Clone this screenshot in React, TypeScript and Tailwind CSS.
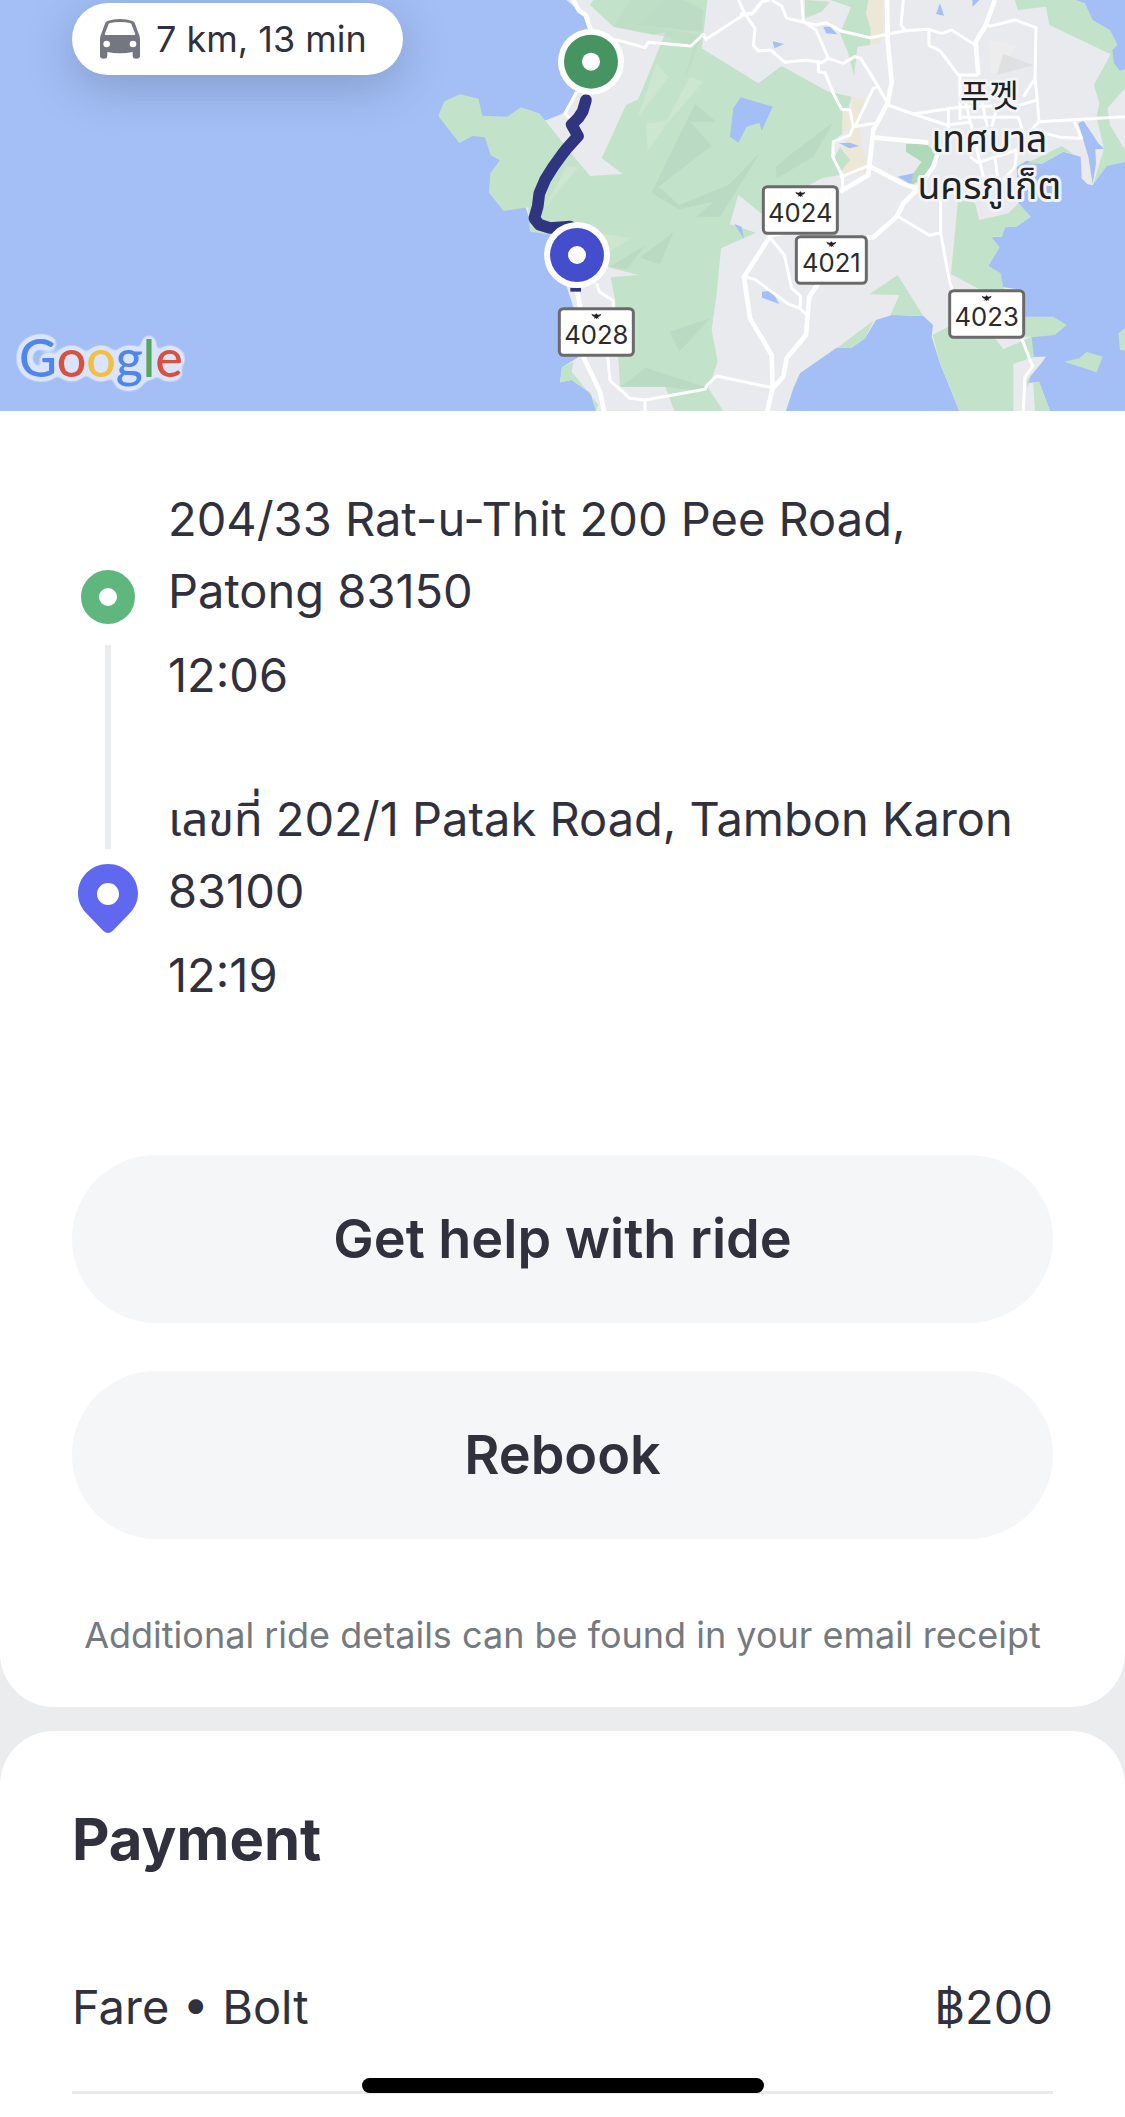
import type { ReactNode } from 'react';

type Stop = {
  address: string;
  time: string;
};

const stops: Stop[] = [
  { address: '204/33 Rat-u-Thit 200 Pee Road, Patong 83150', time: '12:06' },
  { address: 'เลขที่ 202/1 Patak Road, Tambon Karon 83100', time: '12:19' },
];

const WATER = '#a3bff5';
const LAND = '#e8eaed';
const FOREST = '#c3e2ca';
const HILL = '#bbdac3';
const HILL_LIGHT = '#cce6cf';
const SAND = '#ede7d7';

function CarIcon() {
  return (
    <svg viewBox="0 0 120 120" className="size-10 shrink-0" aria-hidden="true">
      <path
        fill="#74777f"
        fillRule="evenodd"
        d="M22 6Q60-6 98 6Q103 8 105 14L116 44Q120 50 120 60V110Q120 119 109 119Q98 119 98 110V99Q60 107 22 99V110Q22 119 11 119Q0 119 0 110V60Q0 50 4 44L15 14Q17 8 22 6ZM29 12Q27 13 26 15L15 43Q13 48 18 48H102Q107 48 105 43L94 15Q93 13 91 12Q60 6 29 12ZM20 65A10 10 0 1 0 20 85A10 10 0 1 0 20 65ZM99 65A10 10 0 1 0 99 85A10 10 0 1 0 99 65Z"
      />
    </svg>
  );
}

function PinIcon() {
  return (
    <svg viewBox="0 0 60 69" className="h-[69px] w-[60px] shrink-0" aria-hidden="true">
      <path
        fill="#5f68ef"
        fillRule="evenodd"
        d="M30 0C46.500 0 60 13 60 29.500C60 38 56 45 51 50L34.500 67Q30 71 25.500 67L9 50C4 45 0 38 0 29.500C0 13 13.500 0 30 0ZM30 19A11 11 0 1 0 30 41A11 11 0 1 0 30 19Z"
      />
    </svg>
  );
}

function RoadShield({ x, y, width = 222, label }: { x: number; y: number; width?: number; label: string }) {
  return (
    <g transform={`translate(${x} ${y})`}>
      <rect width={width} height={140} rx={12} fill="#fff" stroke="#6a6a6a" strokeWidth={9} />
      <path
        fill="#222"
        transform={`translate(${width / 2} 22)`}
        d="M-15-7Q-8-3-4-4L0-8L4-4Q8-3 15-7Q13 2 5 3L8 8L2 6L0 10L-2 6L-8 8L-5 3Q-13 2-15-7Z"
      />
      <text x={width / 2} y={106} textAnchor="middle" fontSize={77} fill="#2b2b2b" className="font-['Inter',sans-serif]">
        {label}
      </text>
    </g>
  );
}

function MapMarker({ x, y, color }: { x: number; y: number; color: string }) {
  return (
    <g transform={`translate(${x} ${y})`}>
      <circle r={99} fill="#fff" />
      <circle r={81} fill={color} />
      <circle r={27} fill="#fff" />
    </g>
  );
}

function RouteMap() {
  return (
    <svg
      viewBox="0 0 3375 1233"
      preserveAspectRatio="xMidYMid slice"
      className="block h-full w-full"
      role="img"
      aria-label="Route map"
    >
      <rect width={3375} height={1233} fill={WATER} />

      {/* West coast */}
      <g transform="translate(1200 0)">
        <path
          fill={LAND}
          d="M500 0L550 45L566 90L530 275L490 340L440 360L300 400L400 690L450 700L500 860L520 920L535 1072L486 1102L480 1147L515 1140L572 1180L588 1233H2175V0Z"
        />
        <path
          fill={FOREST}
          d="M580 0L570 15L640 80L760 104L797 96L715 298L678 315L605 475L668 522L570 528L530 480L418 340L362 322L322 350L247 347L235 296L180 283L133 304L115 348L178 429L218 408L255 412L272 466L300 481L271 520L267 578L311 633L385 622L390 695L500 710L620 800L715 825L632 832L645 900L660 1160H795L823 1233H970L925 1165L953 1085L935 990L950 880L963 745L1068 698L990 672L1015 585L1082 640L1200 570L1265 535L1320 525L1298 480L1305 420L1328 400V330L1345 328L1355 290L1285 275L1145 198L1075 250L905 145L922 0Z"
        />
        <path fill={FOREST} d="M486 1102L520 1085L515 1115L555 1165L595 1215L588 1233L572 1180L515 1140L480 1147Z" />
        <path fill={HILL} d="M690 0H792L715 75L760 85L905 105L870 210L855 230L880 140L800 110L640 80Z" opacity={0.55} />
        <path fill={HILL} d="M790 0H850L910 30L905 95L715 75Z" opacity={0.7} />
        <path
          fill={HILL}
          d="M885 312L948 365H870L935 437L775 560L838 615L985 555L1080 458L960 650H890L940 605L838 628L754 580Z"
        />
        <path fill={HILL} d="M820 697L780 793L720 773ZM735 737L680 808L630 800ZM930 955L838 1055L810 995ZM737 1103L925 1165L915 1175L797 1160H662Z" />
        <path fill={HILL} d="M1300 367L1240 470L1130 535L1128 500L1170 465Z" />
        <path fill={HILL_LIGHT} d="M770 190L806 232L712 355ZM870 230L910 245L800 372L742 455L738 370L800 362ZM500 498L535 502L430 630ZM600 700L695 715L625 755Z" />
        <path fill={LAND} d="M990 672L1015 585L1082 640L1075 692Z" />
        <path fill={WATER} d="M1022 292L1118 320L1085 392L1078 368L1040 380L1015 428L990 410L1000 325ZM1003 672L1025 680L1032 716Z" />
      </g>

      {/* East side: city, bays and islands */}
      <g transform="translate(2220 0)">
        <path fill="#ededed" d="M748 120L832 138L770 220L752 220Z" />
        <path fill="#dfe0e2" d="M790 162L880 195L770 225Z" />
        <path fill={FOREST} d="M195 55V0L270 5L245 35ZM272 0H388L378 40L392 85L390 135L352 140L342 228L325 160L300 100L333 22Z" />
        <path fill={SAND} d="M385 0H430V90L418 132L390 132L393 85L378 40Z" />
        <path fill={SAND} d="M335 290L375 298L358 370L362 430L378 470V515L295 525L330 480L310 440L335 405L338 380L306 400L308 330H335Z" />
        <path fill={FOREST} d="M300 440L330 480L295 525L280 480Z" />
        <path fill="#b0d9ba" d="M498 432H560L600 470L575 520L515 555L500 548L545 485L498 455Z" />
        <path
          fill={FOREST}
          d="M825 0L833 30L918 20L928 75L1112 163L1062 255L1078 310L1070 352L1092 446L1058 557L1100 498L1155 490V450L1110 375L1102 325L1155 265V0Z"
        />
        <path fill={WATER} d="M1008 0L1035 10L1058 60L1110 90L1133 135L1117 150L1122 190L1140 212L1155 208V0Z" />
        <path fill={WATER} d="M1015 370L1030 362L1075 430L1092 446L1066 448L1068 490L1058 552L1045 470Z" />
        <path
          fill={WATER}
          d="M830 500L860 482L905 492L970 455L1022 470L1025 535L1042 552L1058 556L1100 498L1155 486V1233H930L897 1145L862 1150L850 870L790 862L745 797L778 742L753 712L785 710L795 682L828 680L872 650L835 610Z"
        />
        <path
          fill={FOREST}
          d="M655 590L705 610L718 660L805 640L835 610L872 650L828 680L795 682L785 710H753L778 742L745 797L782 820L790 862L800 880H740L633 822Z"
        />
        <path fill={FOREST} d="M860 490L965 438L1000 462L970 455L905 492Z" />
        <path fill={WATER} d="M138 1233L160 1165L180 1120L290 1043H335L375 1015L408 960L455 945L550 948L579 975L575 1010L600 1090L658 1233Z" />
        <path fill={FOREST} d="M388 883L473 825L550 948L452 944L478 885ZM292 1043L400 962L375 1015L335 1043Z" />
        <path fill={FOREST} d="M578 1004L625 980L855 950L940 950L980 975L945 1005L875 1012L882 1070L850 1233H658L600 1090Z" />
        <path fill={LAND} d="M765 1015L875 1010L790 1048ZM820 1092L885 1070L918 1070L905 1088L862 1140L860 1150L885 1233H820Z" />
        <path fill={FOREST} d="M862 1150L897 1145L930 1233H885L880 1150ZM972 1085L1018 1075L1040 1055L1088 1070L1070 1117ZM1135 1000L1155 985V1052L1140 1050Z" />
        <path
          fill={WATER}
          d="M66 875L95 872L118 912L66 893ZM298 430L330 428L358 438L328 445ZM472 530L520 520L512 552ZM250 80H270L292 103L258 100ZM98 124L133 132L103 145ZM600 10L612 47L588 42ZM697 0H718L698 20Z"
        />
      </g>

      {/* Roads */}
      <g fill="none" stroke="#fff" strokeWidth={9} strokeLinejoin="round">
        <g transform="translate(1200 0)">
          <path d="M530 275L495 340L525 372M645 118L735 143L745 127L873 138L910 103L918 118L1035 42H1055L1085 5L1110 0M1015 0L1035 42L1065 85L1060 135L1075 153L1112 150" />
          <path d="M590 850L598 875L640 902V930M623 1070L630 1142L690 1195L735 1200L915 1168L922 1155L950 1128L1112 1162M735 1200V1233" />
          <path strokeWidth={14} d="M520 0L537 32L557 45L572 90M530 865L540 920L552 1075L600 1175L612 1233" />
        </g>
        <g transform="translate(2220 0)">
          <path d="M12 830L45 838L145 912L180 925L200 945M92 715L133 765L155 865L182 888L180 925M92 150L135 187L200 180L245 188L265 175L310 190L345 170L362 175L415 260L440 305" />
          <path d="M0 42L38 40L65 8M95 0L125 18L140 55L228 75L258 68L300 92L390 113L495 92M185 0L190 65L228 90L265 175M235 180V215L255 218L280 280L305 328L330 330L340 380L405 370M340 380L330 405L280 425L278 470L308 530V570M345 380L400 265L415 258" />
          <path d="M490 0L483 75L495 92L565 88L605 100L635 90L705 135M567 92V137L600 152L655 225H715M735 75L752 78L825 60L888 83L885 235L892 300L897 365L1155 350M882 240L850 290M865 400L897 365M890 392L960 412L1025 415L1003 365" />
          <path d="M443 315L520 342L620 375L690 367M520 342L655 322L840 315L892 300M625 330V385M660 225V360M660 352H835L850 400M675 300L735 550M725 300L742 380M770 325L755 380M690 470L715 488L830 450L825 500L790 540M765 470L772 530" />
          <path d="M385 497L300 532M475 650L568 706L602 698M602 590V700L630 850L640 880M80 712L130 700M845 1015L878 1100L855 1130L850 1233" />
          <path
            strokeWidth={14}
            d="M90 710L12 830L30 955L95 1065L98 1165L82 1233M235 850L208 890L198 1005L140 1075L130 1130L98 1165M380 712H400L470 650L490 610L530 570L580 500L600 440M441 0L443 120L455 245L443 310L400 390L385 525L300 575M385 497L490 552L530 565M398 412L565 428M765 0L735 80L707 125L715 225"
          />
        </g>
      </g>

      {/* Driven route */}
      <g transform="translate(1200 0)" fill="none" stroke="#2f357f" strokeLinejoin="round">
        <path
          strokeWidth={35}
          strokeLinecap="round"
          d="M558 300L548 334L535 354L515 374L534 408L500 446L486 464L460 500L436 538L418 580L413 620L403 655L418 674L450 684L510 680"
        />
        <path strokeWidth={12} d="M511 869H543" />
      </g>
      <MapMarker x={1773} y={185} color="#469461" />
      <MapMarker x={1731} y={765} color="#444dcc" />

      <RoadShield x={1678} y={926} label="4028" />
      <RoadShield x={2290} y={560} label="4024" />
      <RoadShield x={2389} y={710} width={210} label="4021" />
      <RoadShield x={2849} y={872} label="4023" />

      <g
        textAnchor="middle"
        fill="#202124"
        stroke="#f1f3f4"
        strokeWidth={18}
        strokeLinejoin="round"
        paintOrder="stroke"
        className="font-['Noto_Sans','Noto_Sans_Thai','Noto_Sans_CJK_KR',sans-serif]"
      >
        <text x={2968} y={322} fontSize={96}>
          푸껫
        </text>
        <text x={2968} y={456} fontSize={112}>
          เทศบาล
        </text>
        <text x={2968} y={598} fontSize={112}>
          นครภูเก็ต
        </text>
      </g>
    </svg>
  );
}

function GoogleLogo() {
  return (
    <svg viewBox="0 0 180 80" className="h-20 w-[180px] overflow-visible" role="img" aria-label="Google">
      <defs>
        {/* Pale outline around the letters */}
        <filter id="logo-halo" x="-10%" y="-20%" width="120%" height="140%" colorInterpolationFilters="sRGB">
          <feGaussianBlur in="SourceAlpha" stdDeviation="4" />
          <feComponentTransfer result="outline">
            <feFuncA type="linear" slope="14" intercept="-1" />
          </feComponentTransfer>
          <feFlood floodColor="#dae5fb" />
          <feComposite in2="outline" operator="in" result="halo" />
          <feMerge>
            <feMergeNode in="halo" />
            <feMergeNode in="SourceGraphic" />
          </feMerge>
        </filter>
      </defs>
      <text x={3} y={54} fontSize={52} filter="url(#logo-halo)" className="font-['Lato',sans-serif] font-medium">
        <tspan fill="#5086ec">G</tspan>
        <tspan fill="#d85140">o</tspan>
        <tspan fill="#f1bf42">o</tspan>
        <tspan fill="#5086ec">g</tspan>
        <tspan fill="#58a55c">l</tspan>
        <tspan fill="#d85140">e</tspan>
      </text>
    </svg>
  );
}

function ActionButton({ children }: { children: ReactNode }) {
  return (
    <button type="button" className="h-[168px] w-full rounded-full bg-[#f5f6f8] text-[54px] leading-[72px] font-semibold">
      {children}
    </button>
  );
}

export default function App() {
  return (
    <div className="flex min-h-screen flex-col gap-6 bg-[#ebecee] font-['Inter','Noto_Sans_Thai','Noto_Sans',sans-serif] text-[#30313d]">
      <main className="rounded-b-[54px] bg-white">
        <div className="relative h-[411px] overflow-hidden">
          <RouteMap />
          <div className="absolute top-[3px] left-[72px] flex h-[72px] items-center gap-4 rounded-full bg-white pr-9 pl-7 text-4xl shadow-[0_12px_48px_rgba(40,50,80,0.25)]">
            <CarIcon />
            <span>7 km, 13 min</span>
          </div>
          <div className="absolute bottom-2 left-4">
            <GoogleLogo />
          </div>
        </div>

        <section className="flex gap-6 px-[72px] pt-[72px]">
          {/* Pickup dot, connector, drop-off pin */}
          <div className="flex w-[72px] shrink-0 flex-col items-center pt-[87px] pb-[78px]">
            <span className="size-[54px] rounded-full border-[18px] border-[#60b77e] bg-white" />
            <span className="mt-[21px] mb-[15px] w-[6px] flex-1 bg-[#ebecee]" />
            <PinIcon />
          </div>
          <ul className="flex min-w-0 flex-1 flex-col gap-[72px] text-[47px] leading-[72px]">
            {stops.map((stop) => (
              <li key={stop.time} className="flex flex-col gap-3">
                <p>{stop.address}</p>
                <p>{stop.time}</p>
              </li>
            ))}
          </ul>
        </section>

        <section className="flex flex-col gap-12 px-[72px] pt-36">
          <ActionButton>Get help with ride</ActionButton>
          <ActionButton>Rebook</ActionButton>
        </section>

        <p className="px-6 pt-[72px] pb-12 text-center text-4xl leading-[48px] text-[#757a80]">
          Additional ride details can be found in your email receipt
        </p>
      </main>

      <section className="flex-1 rounded-t-[54px] bg-white px-[72px] pt-[72px]">
        <h2 className="text-[58px] leading-[72px] font-bold">Payment</h2>
        <div className="mt-24 flex justify-between border-b-[3px] border-[#e9eaec] pb-12 text-[47px] leading-[72px]">
          <span>Fare • Bolt</span>
          <span>฿200</span>
        </div>
      </section>

      <div className="fixed bottom-6 left-1/2 h-[15px] w-[402px] -translate-x-1/2 rounded-full bg-black" />
    </div>
  );
}
